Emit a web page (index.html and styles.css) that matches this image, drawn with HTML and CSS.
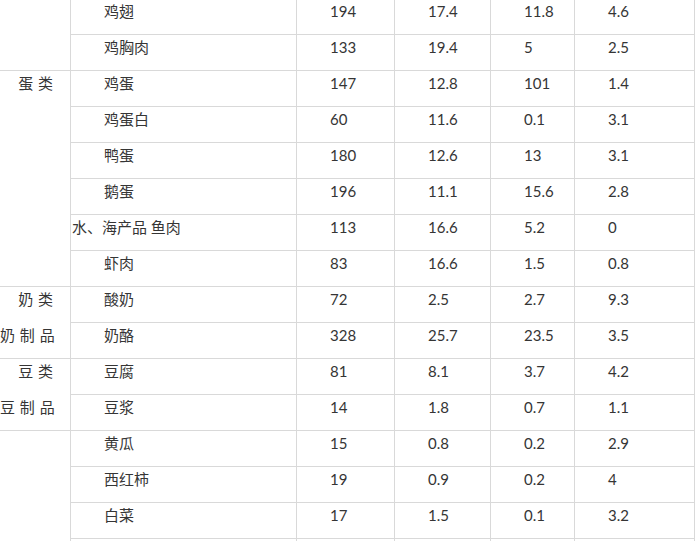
FILE: index.html
```html
<!DOCTYPE html>
<html lang="zh">
<head>
<meta charset="utf-8">
<title>食物营养成分表</title>
<link rel="stylesheet" href="styles.css">
</head>
<body>
<div class="table">
  <div class="cell group span2"></div>
  <div class="cell">鸡翅</div><div class="cell">194</div><div class="cell">17.4</div><div class="cell">11.8</div><div class="cell">4.6</div>
  <div class="cell">鸡胸肉</div><div class="cell">133</div><div class="cell">19.4</div><div class="cell">5</div><div class="cell">2.5</div>

  <div class="cell group span6"><span class="line">蛋 类</span></div>
  <div class="cell">鸡蛋</div><div class="cell">147</div><div class="cell">12.8</div><div class="cell">101</div><div class="cell">1.4</div>
  <div class="cell">鸡蛋白</div><div class="cell">60</div><div class="cell">11.6</div><div class="cell">0.1</div><div class="cell">3.1</div>
  <div class="cell">鸭蛋</div><div class="cell">180</div><div class="cell">12.6</div><div class="cell">13</div><div class="cell">3.1</div>
  <div class="cell">鹅蛋</div><div class="cell">196</div><div class="cell">11.1</div><div class="cell">15.6</div><div class="cell">2.8</div>
  <div class="cell hang">水、海产品 鱼肉</div><div class="cell">113</div><div class="cell">16.6</div><div class="cell">5.2</div><div class="cell">0</div>
  <div class="cell">虾肉</div><div class="cell">83</div><div class="cell">16.6</div><div class="cell">1.5</div><div class="cell">0.8</div>

  <div class="cell group span2"><span class="line">奶 类</span><span class="line">奶 制 品</span></div>
  <div class="cell">酸奶</div><div class="cell">72</div><div class="cell">2.5</div><div class="cell">2.7</div><div class="cell">9.3</div>
  <div class="cell">奶酪</div><div class="cell">328</div><div class="cell">25.7</div><div class="cell">23.5</div><div class="cell">3.5</div>

  <div class="cell group span2"><span class="line">豆 类</span><span class="line">豆 制 品</span></div>
  <div class="cell">豆腐</div><div class="cell">81</div><div class="cell">8.1</div><div class="cell">3.7</div><div class="cell">4.2</div>
  <div class="cell">豆浆</div><div class="cell">14</div><div class="cell">1.8</div><div class="cell">0.7</div><div class="cell">1.1</div>

  <div class="cell group span4"></div>
  <div class="cell">黄瓜</div><div class="cell">15</div><div class="cell">0.8</div><div class="cell">0.2</div><div class="cell">2.9</div>
  <div class="cell">西红柿</div><div class="cell">19</div><div class="cell">0.9</div><div class="cell">0.2</div><div class="cell">4</div>
  <div class="cell">白菜</div><div class="cell">17</div><div class="cell">1.5</div><div class="cell">0.1</div><div class="cell">3.2</div>
  <div class="cell"></div><div class="cell"></div><div class="cell"></div><div class="cell"></div><div class="cell"></div>
</div>
</body>
</html>
```

FILE: styles.css
```css
html, body {
  margin: 0;
  padding: 0;
  background: #ffffff;
}

body {
  font-family: "Lato", "Noto Sans CJK SC", sans-serif;
  font-size: 15px;
  color: #353535;
}

.table {
  display: grid;
  grid-template-columns: 71px 226px 98px 96px 84px 120px;
  grid-auto-rows: 36px;
  margin-top: -1px;
}

.cell {
  box-sizing: border-box;
  border-right: 1px solid #d9d9d9;
  border-bottom: 1px solid #d9d9d9;
  padding-left: 33px;
  line-height: 24px;
  white-space: nowrap;
}

.cell.hang {
  padding-left: 1px;
}

.group {
  padding-left: 0;
  padding-right: 17px;
  text-align: right;
  word-spacing: 1px;
}

.group .line {
  display: block;
  height: 36px;
}

.span2 { grid-row: span 2; }
.span4 { grid-row: span 4; }
.span6 { grid-row: span 6; }
```
